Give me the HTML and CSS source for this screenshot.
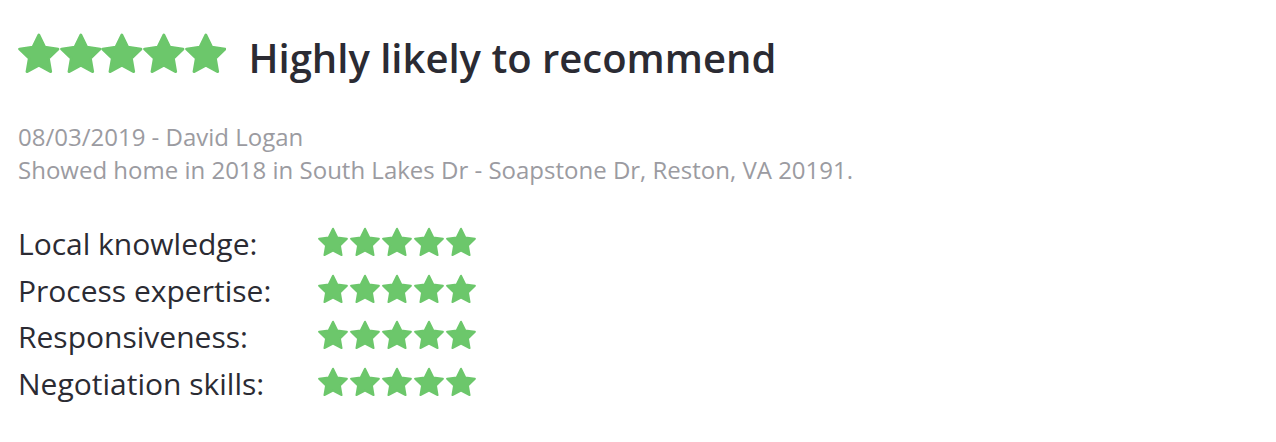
FILE: index.html
```html
<!DOCTYPE html>
<html>
<head>
<meta charset="utf-8">
<link rel="stylesheet" href="styles.css">
</head>
<body>
<svg width="0" height="0" class="defs">
  <defs>
    <symbol id="star" viewBox="1.2 1.3 21.6 20.6">
      <path d="M12 2l3.09 6.26L22 9.27l-5 4.87 1.18 6.88L12 17.77l-6.18 3.25L7 14.14 2 9.27l6.91-1.01L12 2z" fill="#6cc76b" stroke="#6cc76b" stroke-width="1.4" stroke-linejoin="round"/>
    </symbol>
  </defs>
</svg>
<div class="review">
  <div class="headline">
    <div class="stars stars-lg">
      <svg><use href="#star"/></svg><svg><use href="#star"/></svg><svg><use href="#star"/></svg><svg><use href="#star"/></svg><svg><use href="#star"/></svg>
    </div>
    <h2 class="title">Highly likely to recommend</h2>
  </div>
  <div class="meta">
    <div>08/03/2019 - David Logan</div>
    <div>Showed home in 2018 in South Lakes Dr - Soapstone Dr, Reston, VA 20191.</div>
  </div>
  <div class="ratings">
    <div class="row"><span class="label">Local knowledge:</span><span class="stars stars-sm"><svg><use href="#star"/></svg><svg><use href="#star"/></svg><svg><use href="#star"/></svg><svg><use href="#star"/></svg><svg><use href="#star"/></svg></span></div>
    <div class="row"><span class="label">Process expertise:</span><span class="stars stars-sm"><svg><use href="#star"/></svg><svg><use href="#star"/></svg><svg><use href="#star"/></svg><svg><use href="#star"/></svg><svg><use href="#star"/></svg></span></div>
    <div class="row"><span class="label">Responsiveness:</span><span class="stars stars-sm"><svg><use href="#star"/></svg><svg><use href="#star"/></svg><svg><use href="#star"/></svg><svg><use href="#star"/></svg><svg><use href="#star"/></svg></span></div>
    <div class="row"><span class="label">Negotiation skills:</span><span class="stars stars-sm"><svg><use href="#star"/></svg><svg><use href="#star"/></svg><svg><use href="#star"/></svg><svg><use href="#star"/></svg><svg><use href="#star"/></svg></span></div>
  </div>
</div>
</body>
</html>
```
FILE: styles.css
```css
html, body {
  margin: 0;
  padding: 0;
  background: #ffffff;
}
body {
  font-family: "Open Sans", "Liberation Sans", sans-serif;
  color: #2b2b33;
}
.defs {
  position: absolute;
  width: 0;
  height: 0;
}
.review {
  padding: 33px 0 0 18px;
}
.headline {
  display: flex;
  align-items: flex-start;
  gap: 22px;
}
.stars {
  display: flex;
}
.stars-lg svg {
  width: 41.7px;
  height: 41px;
}
.stars-sm {
  gap: 2px;
  align-self: flex-start;
  margin-top: 6px;
}
.stars-sm svg {
  width: 30px;
  height: 30px;
}
.title {
  margin: 0;
  font-size: 40px;
  font-weight: 600;
  line-height: 50px;
}
.meta {
  margin-top: 37px;
  color: #9b9ba1;
  font-size: 24px;
  line-height: 33px;
}
.ratings {
  margin-top: 35px;
}
.row {
  display: flex;
  height: 46.5px;
  line-height: 46.5px;
}
.label {
  width: 300px;
  font-size: 30px;
}
```
